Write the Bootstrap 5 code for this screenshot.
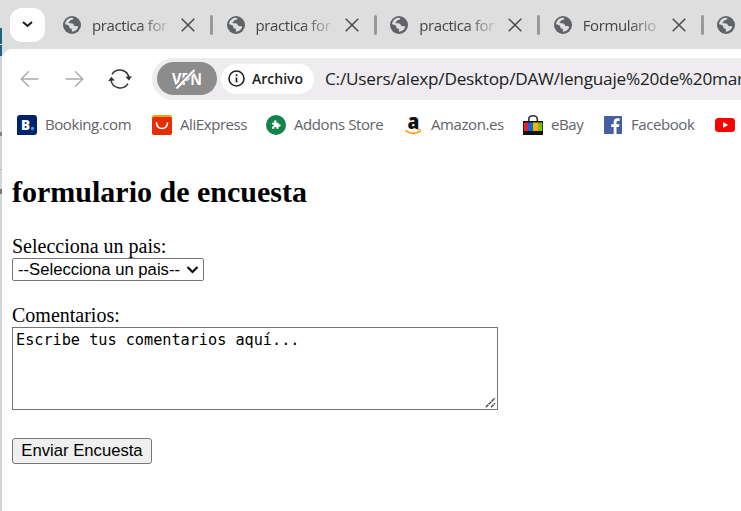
<!DOCTYPE html>
<html lang="es">
<head>
<meta charset="utf-8">
<meta name="viewport" content="width=device-width, initial-scale=1">
<title>formulario de encuesta</title>
<link href="https://cdn.jsdelivr.net/npm/bootstrap@5.3.0/dist/css/bootstrap.min.css" rel="stylesheet">
<style>
body{height:511px;background:#dedede;font-family:"Open Sans","Noto Sans",sans-serif}
svg{display:block;flex:none}
.desk-edge{width:2px;background:linear-gradient(#dedede 28px,#1d6185 28px,#1d6185 44px,#e8f0f4 44px,#e8f0f4 45px,#1d6185 45px,#1d6185 56px,#d4d4d4 56px,#d4d4d4 132px,#8d8072 132px,#8d8072 136px,#d4d4d4 136px,#d4d4d4 169px,#b5b5b5 169px,#b5b5b5 170px,#d4d4d4 170px,#d4d4d4 189px,#777 189px,#777 194px,#d4d4d4 194px)}
.window-col{min-width:0}
.tabstrip{height:49px}
.tab-menu{width:35px;height:34px;border-radius:12px;margin:0 18px 0 8px}
.tab-item{width:163.6px;height:48px}
.tab-title{width:78px;margin:0 11px;font-size:15px;letter-spacing:-.4px;line-height:24px;color:#444;-webkit-mask-image:linear-gradient(90deg,#000 60%,rgba(0,0,0,.15) 97%);mask-image:linear-gradient(90deg,#000 60%,rgba(0,0,0,.15) 97%)}
.tab-sep{width:3px;height:20px;border-radius:2px;background:#999;margin-left:15px}
.browser{border-top-left-radius:11px}
.toolbar{height:59px;padding-left:18px}
.nav-forward{margin-left:26px}
.omnibox{height:42px;background:#eeecee;border-radius:21px 0 0 21px;padding-left:5px;margin-left:20px}
.vpn-pill{width:60px;height:33px;border-radius:17px;background:#8c8c8c}
.scheme{width:93px;height:30px;border-radius:15px;margin-left:4px;padding-left:7px;font-size:14px;font-weight:600;color:#222}
.scheme-name{margin-left:7px}
.address{font-size:17.2px;color:#202124;margin-left:11px;line-height:24px;letter-spacing:-.23px}
.bookmarks{height:34px;padding-left:15px;font-size:15px;letter-spacing:-.42px;color:#63636a}
.bm{height:24px}
.bm span{margin-left:8px;line-height:22px;margin-bottom:2px}
.bm-1{width:135px}.bm-2{width:114px}.bm-3{width:137px}.bm-4{width:120px}.bm-5{width:81px}.bm-6{width:111px}
.bm-6 span{margin-left:9px}
.page-body{padding:33px 0 0 10px;font:20px/23px "Liberation Serif",serif;color:#000}
.page-body h2{font-size:30px;line-height:34px;font-weight:700;margin:0 0 26px}
.country{width:192px;height:23px;border:1px solid #767676;border-radius:2px;font:16.67px/21px "Liberation Sans",sans-serif;padding:0 4px 0 5px;margin-bottom:23px}
.remarks-box{width:486px;margin-bottom:28px}
.remarks{display:block;resize:none;width:486px;height:83px;border:1px solid #767676;border-radius:0;padding:2px 3px;font:15.22px/20px "DejaVu Sans Mono",monospace;letter-spacing:-.02px;color:#000;background:#fff;outline:0}
.grip{right:2px;bottom:2px}
.send{display:block;width:140px;height:26px;border:1px solid #767676;border-radius:3px;background:#efefef;color:#000;font:16.67px/22px "Liberation Sans",sans-serif;padding:0}
</style>
</head>
<body class="d-flex overflow-hidden">
<svg width="0" height="0" class="position-absolute"><defs>
<symbol id="globe" viewBox="0 0 18 18"><circle cx="9" cy="9" r="9" fill="#5f6368"/><path d="M10.3 1.9c-.2 1.500-1 2.200-2.600 2.200-.5 1.300-1.900 1.800-2.400 3 1.700.3 4-.1 5 1 .8.9.2 1.700 1.500 2 .8.200 1.500-.3 2.300-.1.700.2.600.9 1.200 1.300-1.300 2.700-3.600 4.400-6.400 4.400v-2.100c0-1-.6-1.100-1.500-1.100-1.100 0-1.100-1-1.100-2C6 9 3.500 8.600 2 8.200 2.400 4.700 5.100 2 8.800 1.800z" fill="#dedede"/></symbol>
<symbol id="close" viewBox="0 0 14 14"><path d="M.7.700l12.600 12.600M13.300.7L.7 13.300" stroke="#4a4a4a" stroke-width="1.500" fill="none"/></symbol>
<clipPath id="bag-shape"><rect x="0" y="6" width="20" height="14"/></clipPath>
</defs></svg>
<div class="desk-edge flex-shrink-0"></div>
<div class="window-col flex-grow-1 d-flex flex-column">
  <div class="tabstrip d-flex align-items-center overflow-hidden">
    <button class="tab-menu btn bg-white p-0 border-0 flex-shrink-0 d-flex align-items-center justify-content-center" aria-label="Buscar pestañas"><svg width="11" height="7" viewBox="0 0 11 7"><path d="M1 1l4.500 4L10 1" fill="none" stroke="#1b1b1b" stroke-width="2"/></svg></button>
    <div class="tab-item d-flex align-items-center flex-shrink-0"><svg width="18" height="18"><use href="#globe"/></svg><span class="tab-title text-nowrap">practica for</span><svg width="14" height="14"><use href="#close"/></svg><i class="tab-sep"></i></div>
    <div class="tab-item d-flex align-items-center flex-shrink-0"><svg width="18" height="18"><use href="#globe"/></svg><span class="tab-title text-nowrap">practica for</span><svg width="14" height="14"><use href="#close"/></svg><i class="tab-sep"></i></div>
    <div class="tab-item d-flex align-items-center flex-shrink-0"><svg width="18" height="18"><use href="#globe"/></svg><span class="tab-title text-nowrap">practica for</span><svg width="14" height="14"><use href="#close"/></svg><i class="tab-sep"></i></div>
    <div class="tab-item d-flex align-items-center flex-shrink-0"><svg width="18" height="18"><use href="#globe"/></svg><span class="tab-title text-nowrap">Formulario</span><svg width="14" height="14"><use href="#close"/></svg><i class="tab-sep"></i></div>
    <div class="tab-item d-flex align-items-center flex-shrink-0"><svg width="18" height="18"><use href="#globe"/></svg></div>
  </div>
  <div class="browser bg-white flex-grow-1">
    <div class="toolbar d-flex align-items-center">
      <svg width="19" height="18" viewBox="0 0 19 18"><path d="M18.500 9H2M9 1.300L1.200 9 9 16.700" fill="none" stroke="#ababab" stroke-width="1.400"/></svg>
      <svg class="nav-forward" width="19" height="18" viewBox="0 0 19 18"><path d="M.5 9H17M10 1.300L17.800 9 10 16.700" fill="none" stroke="#ababab" stroke-width="1.400"/></svg>
      <svg class="ms-4" width="24" height="22" viewBox="0 0 24 22"><g fill="none" stroke="#333" stroke-width="1.500"><path d="M4 6.300A9.300 9.300 0 0 1 21 10M20 15.700A9.300 9.300 0 0 1 3 12"/></g><path d="M17.300 8.700l6.700-.4-3 4.200zM.2 13l3.100-4.200 3.500 3.600z" fill="#333"/></svg>
      <div class="omnibox d-flex align-items-center flex-grow-1 overflow-hidden">
        <div class="vpn-pill flex-shrink-0 d-flex align-items-center justify-content-center"><svg width="32" height="22" viewBox="0 0 32 22"><text x="1" y="17" textLength="30" lengthAdjust="spacingAndGlyphs" font-family="Open Sans,sans-serif" font-weight="700" font-size="16" fill="#fff">VPN</text><path d="M4.500 20L23.500 2" stroke="#8c8c8c" stroke-width="4"/><path d="M5.500 20.500L23.500 2" stroke="#fff" stroke-width="2.200"/></svg></div>
        <div class="scheme bg-white flex-shrink-0 d-flex align-items-center"><svg width="17" height="17" viewBox="0 0 17 17"><circle cx="8.500" cy="8.500" r="7.500" fill="none" stroke="#222" stroke-width="1.600"/><path d="M8.500 7.500V12.500M8.500 4.300v1.900" stroke="#222" stroke-width="1.700"/></svg><span class="scheme-name">Archivo</span></div>
        <span class="address text-nowrap">C:/Users/alexp/Desktop/DAW/lenguaje%20de%20mar</span>
      </div>
    </div>
    <div class="bookmarks d-flex align-items-center text-nowrap overflow-hidden">
      <div class="bm bm-1 d-flex align-items-center flex-shrink-0"><svg width="20" height="20" viewBox="0 0 20 20"><path d="M3 0h14a3 3 0 0 1 3 3v14a3 3 0 0 1-3 3H0V3a3 3 0 0 1 3-3z" fill="#00226b"/><text x="4" y="15" font-family="Open Sans,sans-serif" font-weight="800" font-size="13.500" fill="#fff">B</text><circle cx="15.500" cy="13.500" r="1.700" fill="#28a5e8"/></svg><span>Booking.com</span></div>
      <div class="bm bm-2 d-flex align-items-center flex-shrink-0"><svg width="20" height="20" viewBox="0 0 20 20"><rect width="20" height="20" rx="2.500" fill="#ff9d00"/><path d="M0 4q0-2 2-2h16q2 0 2 2v13.500q0 2.500-2.500 2.500h-15Q0 20 0 17.500z" fill="#e62e04"/><path d="M4.500 8c.8 7.300 10.200 7.300 11 0" fill="none" stroke="#fff" stroke-width="1.700" stroke-linecap="round"/></svg><span>AliExpress</span></div>
      <div class="bm bm-3 d-flex align-items-center flex-shrink-0"><svg width="20" height="20" viewBox="0 0 20 20"><circle cx="10" cy="10" r="10" fill="#12834a"/><path transform="translate(1.500 1.500) scale(.82)" d="M5.500 7.500h2.700C7.500 5.500 8.200 4.700 9.500 4.700s2 1 1.200 2.800h2.800v2.200c1.700-.6 2.500.1 2.500 1.200s-.9 1.900-2.500 1.200V15h-2.700c.3-1.600-.2-2.200-1.200-2.200S8 13.500 8.300 15H5.500v-2.700c1.500.2 2.100-.3 2.100-1.200 0-1-.7-1.500-2.100-1.200z" fill="#fff"/></svg><span>Addons Store</span></div>
      <div class="bm bm-4 d-flex align-items-center flex-shrink-0"><svg width="20" height="20" viewBox="0 0 20 20"><text x="4.600" y="14" textLength="11.500" lengthAdjust="spacingAndGlyphs" font-family="Open Sans,sans-serif" font-weight="800" font-size="21" fill="#111">a</text><path d="M2.500 15.300c4.500 3.600 10 3.600 14 1" fill="none" stroke="#ff9900" stroke-width="1.500"/><path d="M14.200 15c1.300-.5 2.500-.5 3.200-.2.100 1-.4 2-1.200 2.800" fill="none" stroke="#ff9900" stroke-width="1.100"/></svg><span>Amazon.es</span></div>
      <div class="bm bm-5 d-flex align-items-center flex-shrink-0"><svg width="20" height="20" viewBox="0 0 20 20"><path d="M5.700 6V4.500Q5.700.8 10 .8t4.300 3.700V6" fill="none" stroke="#333" stroke-width="1.600"/><g clip-path="url(#bag-shape)"><path fill="#111" d="M0 6h20v14H0z"/><path fill="#e8202a" d="M.7 7.500H5V16H.7z"/><path fill="#0c64d8" d="M5 7.500h5V16H5z"/><path fill="#f9b300" d="M10 7.500h5V16h-5z"/><path fill="#86b817" d="M15 7.500h4.300V16H15z"/></g></svg><span>eBay</span></div>
      <div class="bm bm-6 d-flex align-items-center flex-shrink-0"><svg width="18" height="18" viewBox="0 0 18 18"><rect width="18" height="18" rx=".8" fill="#4460a0"/><path d="M9.700 18v-7H7.200V8.300h2.500V6.200c0-2.500 1.500-3.900 3.800-3.900.9 0 1.800.1 2.100.1v2.500H14c-1.200 0-1.500.6-1.500 1.500v1.900h2.900l-.4 2.700h-2.500v7z" fill="#fff"/></svg><span>Facebook</span></div>
      <div class="bm d-flex align-items-center flex-shrink-0"><svg width="20" height="14" viewBox="0 0 20 14"><rect width="20" height="14" rx="3.500" fill="#f00"/><path d="M8 4l5.200 3L8 10z" fill="#fff"/></svg></div>
    </div>
    <main class="page-body">
      <h2>formulario de encuesta</h2>
      <form>
        <label class="d-block" for="pais">Selecciona un pais:</label>
        <div id="pais" role="combobox" tabindex="0" class="country bg-white d-flex align-items-center justify-content-between text-nowrap"><span>--Selecciona un pais--</span><svg width="13" height="8" viewBox="0 0 13 8"><path d="M1.500 1l5 5 5-5" fill="none" stroke="#111" stroke-width="2.200"/></svg></div>
        <label class="d-block" for="com">Comentarios:</label>
        <div class="remarks-box position-relative">
          <textarea id="com" class="remarks">Escribe tus comentarios aquí...</textarea>
          <svg class="grip position-absolute" width="11" height="11" viewBox="0 0 11 11"><path d="M.8 10.200L10 1M6 10.200L10 6.200" stroke="#555" stroke-width="1.500" stroke-dasharray="3.600 .5"/></svg>
        </div>
        <button type="button" class="send">Enviar Encuesta</button>
      </form>
    </main>
  </div>
</div>
<script src="https://cdn.jsdelivr.net/npm/bootstrap@5.3.0/dist/js/bootstrap.bundle.min.js"></script>
</body>
</html>
